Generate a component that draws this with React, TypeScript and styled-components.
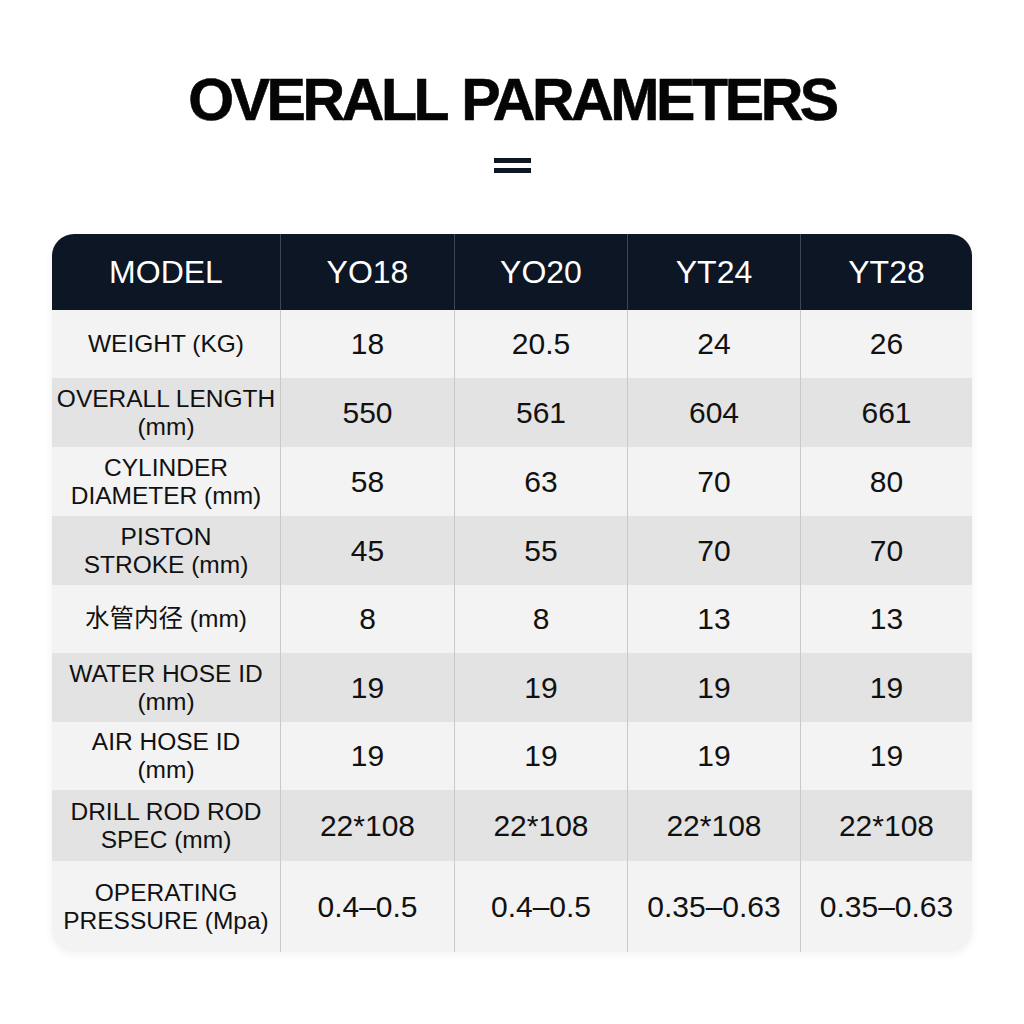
import React from "react";
import styled, { createGlobalStyle } from "styled-components";

const GlobalStyle = createGlobalStyle`
  html, body { margin: 0; padding: 0; background: #ffffff; }
  body { font-family: "Liberation Sans", Arial, "Noto Sans CJK SC", sans-serif; }
`;

const Page = styled.div`
  width: 1024px;
  height: 1024px;
  display: flex;
  flex-direction: column;
  align-items: center;
  background: #ffffff;
`;

const Title = styled.h1`
  margin: 71px 0 0;
  font-family: "Liberation Sans", Arial, sans-serif;
  font-weight: 700;
  font-size: 59px;
  line-height: 59px;
  letter-spacing: -3.4px;
  word-spacing: 3px;
  color: #050505;
  text-align: center;
  -webkit-text-stroke: 0.6px #050505;
`;

const EqualMark = styled.div`
  margin-top: 28px;
  display: flex;
  flex-direction: column;
  gap: 5px;
`;

const Bar = styled.span`
  display: block;
  width: 37px;
  height: 5px;
  background: #0d1726;
`;

const Table = styled.div`
  margin-top: 61px;
  width: 920px;
  border-radius: 22px;
  overflow: hidden;
  box-shadow: 0 2px 8px rgba(0, 0, 0, 0.06);
  display: flex;
  flex-direction: column;
`;

const Row = styled.div<{ $h: number; $shade: "head" | "light" | "dark" }>`
  display: grid;
  grid-template-columns: 228px 174px 173px 173px 1fr;
  height: ${(p) => p.$h}px;
  background: ${(p) =>
    p.$shade === "head" ? "#0c1625" : p.$shade === "dark" ? "#e3e3e3" : "#f3f3f3"};
  color: ${(p) => (p.$shade === "head" ? "#ffffff" : "#111111")};
`;

const Cell = styled.div<{ $head?: boolean; $first?: boolean; $label?: boolean }>`
  display: flex;
  align-items: center;
  justify-content: center;
  text-align: center;
  border-left: ${(p) =>
    p.$first ? "none" : p.$head ? "1px solid #3d4654" : "1px solid #c9c9c9"};
  font-family: "Liberation Sans", Arial, "Noto Sans CJK SC", sans-serif;
  font-size: ${(p) => (p.$head ? 32 : p.$label ? 24.5 : 30)}px;
  line-height: ${(p) => (p.$label ? 28 : 32)}px;
`;

type DataRow = { label: React.ReactNode; values: string[]; h: number };

const models = ["YO18", "YO20", "YT24", "YT28"];

const rows: DataRow[] = [
  { label: "WEIGHT (KG)", values: ["18", "20.5", "24", "26"], h: 68 },
  { label: <>OVERALL LENGTH<br />(mm)</>, values: ["550", "561", "604", "661"], h: 69 },
  { label: <>CYLINDER<br />DIAMETER (mm)</>, values: ["58", "63", "70", "80"], h: 69 },
  { label: <>PISTON<br />STROKE (mm)</>, values: ["45", "55", "70", "70"], h: 69 },
  { label: "水管内径 (mm)", values: ["8", "8", "13", "13"], h: 68 },
  { label: <>WATER HOSE ID<br />(mm)</>, values: ["19", "19", "19", "19"], h: 69 },
  { label: <>AIR HOSE ID<br />(mm)</>, values: ["19", "19", "19", "19"], h: 68 },
  { label: <>DRILL ROD ROD<br />SPEC (mm)</>, values: ["22*108", "22*108", "22*108", "22*108"], h: 71 },
  { label: <>OPERATING<br />PRESSURE (Mpa)</>, values: ["0.4–0.5", "0.4–0.5", "0.35–0.63", "0.35–0.63"], h: 91 },
];

export default function App() {
  return (
    <Page>
      <GlobalStyle />
      <Title>OVERALL PARAMETERS</Title>
      <EqualMark>
        <Bar />
        <Bar />
      </EqualMark>
      <Table>
        <Row $h={76} $shade="head">
          <Cell $head $first>MODEL</Cell>
          {models.map((m) => (
            <Cell $head key={m}>{m}</Cell>
          ))}
        </Row>
        {rows.map((r, i) => (
          <Row key={i} $h={r.h} $shade={i % 2 === 0 ? "light" : "dark"}>
            <Cell $first $label>{r.label}</Cell>
            {r.values.map((v, j) => (
              <Cell key={j}>{v}</Cell>
            ))}
          </Row>
        ))}
      </Table>
    </Page>
  );
}
